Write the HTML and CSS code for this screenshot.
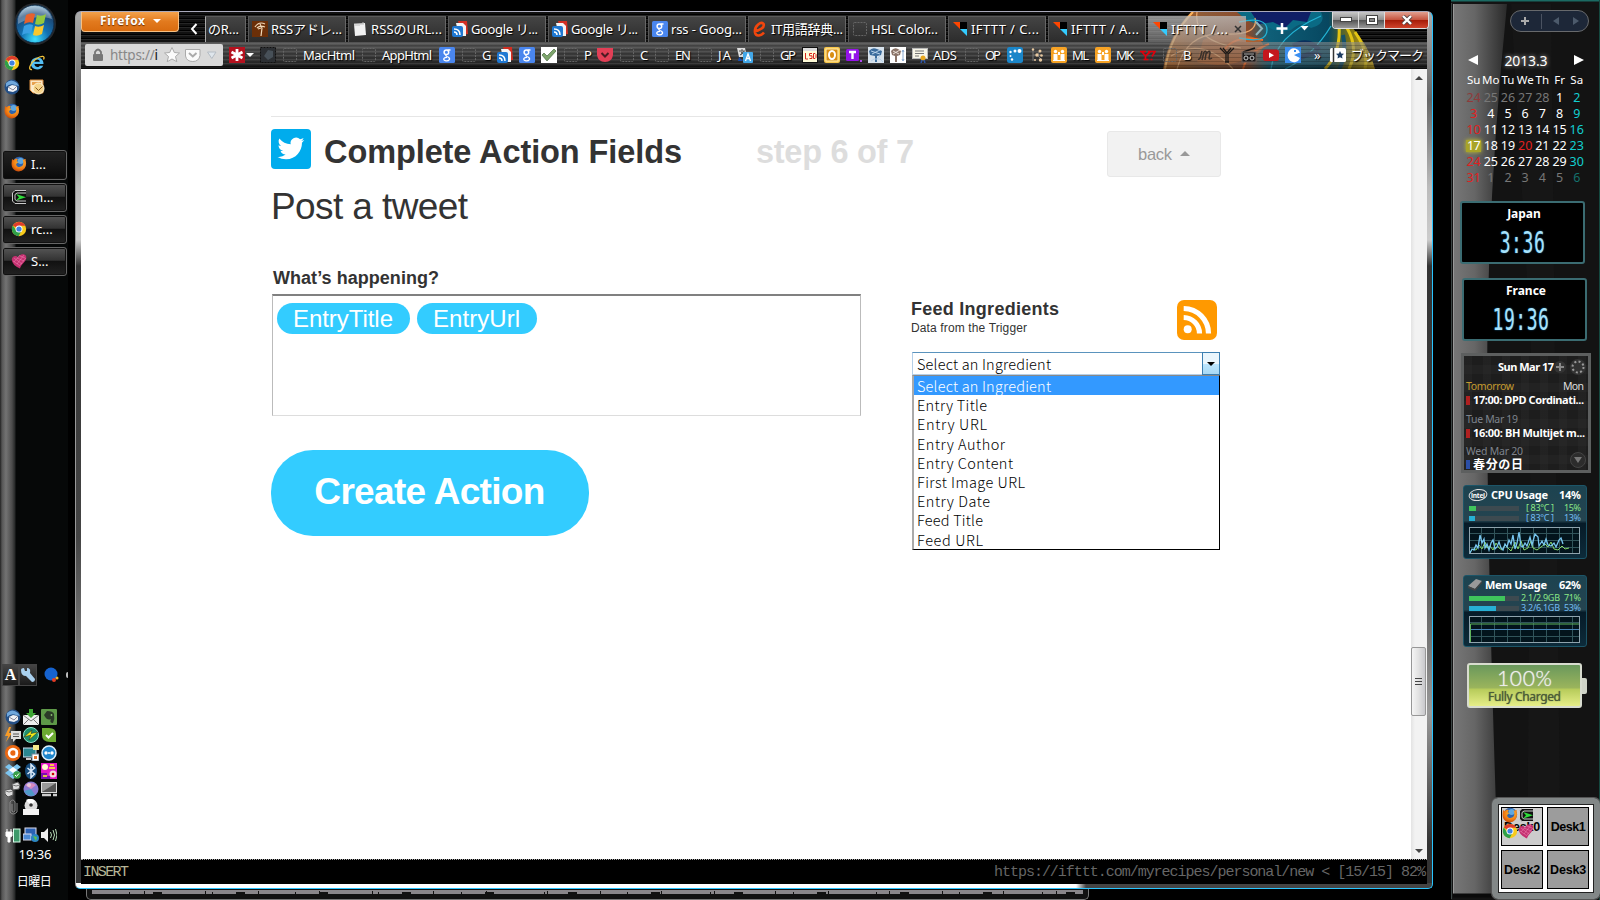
FILE: index.html
```html
<!DOCTYPE html>
<html lang="ja">
<head>
<meta charset="utf-8">
<title>IFTTT / Create</title>
<link rel="stylesheet" href="styles.css">
</head>
<body>
<svg class="defs" width="0" height="0">
  <defs>
    <linearGradient id="gSide" x1="0" x2="1" y1="0" y2="0"><stop offset="0" stop-color="#777"/><stop offset=".4" stop-color="#666"/><stop offset="1" stop-color="#2a2a2a"/></linearGradient>
    <radialGradient id="gOrb" cx=".5" cy=".9" r=".9"><stop offset="0" stop-color="#3fe0ff"/><stop offset=".4" stop-color="#1272b4"/><stop offset=".75" stop-color="#1c4a78"/><stop offset="1" stop-color="#9cc4dc"/></radialGradient>
    <radialGradient id="gFox" cx=".6" cy=".3" r=".8"><stop offset="0" stop-color="#ffc53a"/><stop offset=".6" stop-color="#f07a12"/><stop offset="1" stop-color="#b83a08"/></radialGradient>
    <pattern id="grid" width="13" height="7" patternUnits="userSpaceOnUse"><path d="M0 6.5H13M12.5 0V7" stroke="#31545a" fill="none"/></pattern>
  </defs>
  <symbol id="chrome" viewBox="0 0 16 16"><circle cx="8" cy="8" r="7.2" fill="#f7ca1c"/><path d="M8 8 1.8 4.4A7.2 7.2 0 0 1 14.4 4.8H8z" fill="#df3c2c"/><path d="M1.8 4.4A7.2 7.2 0 0 0 7.6 15.2L10.6 9.6 8 8 5 9z" fill="#2fa04a"/><circle cx="8" cy="8" r="3.5" fill="#fff"/><circle cx="8" cy="8" r="2.6" fill="#3f82e0"/></symbol>
  <symbol id="firefox" viewBox="0 0 16 16"><circle cx="8.3" cy="7.6" r="6.8" fill="#2d63ad"/><circle cx="9.6" cy="5" r="3" fill="#5fa8e0"/><path d="M1 3 2.8 4.2C4 2.6 5.6 2.6 6.8 3.2L5.6 5.2 7.4 6 5.2 8C5 10.6 8 11.8 10 10.6c3-1.4 2.6-5 1.6-7C14 4 15 1.6 14.6 4.6c1.8 6-2 10.6-6.6 10.8C3 15.6 .2 11.6 .6 7z" fill="url(#gFox)"/></symbol>
  <symbol id="ie" viewBox="0 0 16 16"><path d="M14.5 9H5.400c.2 3.400 4.400 3.800 5.400 1.800h3.400C12.300 16.300 1.800 15.800 1.800 8.600 1.800.6 14.800-.1 14.500 9zM5.400 6.800h5.400C10.500 3.800 5.800 3.800 5.400 6.800z" fill="#53bdf2"/><path d="M3 14.500C-1.500 15.500 1 8 7 4s9.500-3 7.500.5" stroke="#f3c43a" stroke-width="1.300" fill="none"/></symbol>
  <symbol id="bird" viewBox="0 0 16 16"><circle cx="8" cy="8" r="7.500" fill="#244f85"/><path d="M2 4Q7-1 13 4l2 3-4-1Q6 4 2 8z" fill="#6fa7dc"/><path d="M4 8l4-2 5 1v4l-4 2-5-1z" fill="#eef0f4"/><path d="M4 8l5 3 4-4" stroke="#889" fill="none"/></symbol>
  <symbol id="outlook" viewBox="0 0 16 16"><path d="M1 1h13v13H4l-3-3z" fill="#fbe8c8" stroke="#d98a3a"/><path d="M3 3h9v3H3z" fill="#e8a250"/><circle cx="9.500" cy="9.500" r="5.500" fill="#f5d48c" stroke="#fff5da"/><path d="m6.500 8.500 3 3 4-4" stroke="#8a5a20" fill="none"/></symbol>
  <symbol id="putty" viewBox="0 0 16 16"><path d="M15 1.500H4L1.500 4v8L4 14.500h11M15 4H6L4 5.500v5L6 12h9" stroke="#ccc" stroke-width="1" fill="#111"/><path d="M5 5l10 3.300L5 11.500l3-3.200z" fill="#2fdc3a"/></symbol>
  <symbol id="heart" viewBox="0 0 16 16"><path d="M9 15.500Q1 12 .8 6.500C1 3 5 2 7 4.500 8.500.5 15 0 15.300 4 15.500 9 10 11 9 15.500z" fill="#c43070"/><path d="M3 5l8 6M2 8l6 4M6 5l7 3M9 3l5 2M13 2 6 11M9 2 3 9M15 5l-7 8" stroke="#f08ab6" stroke-width=".5"/></symbol>
  <symbol id="ifttt" viewBox="0 0 16 16"><path d="M1 1h7v7z" fill="#ff4500"/><path d="M8 1h7v7H8z" fill="#000"/><path d="M8 8h7v7z" fill="#3cf"/></symbol>
  <symbol id="reader" viewBox="0 0 16 16"><path d="M6 0h9l1 13-6 1z" fill="#d32f22"/><path d="M4 2h7l3 3v10H7z" fill="#f4f4f4"/><rect x="0" y="5" width="11" height="11" rx="2" fill="#1f78d2"/><path d="M2 8q6 0 6 6M2 11q3 0 3 3" stroke="#fff" stroke-width="1.500" fill="none"/></symbol>
  <symbol id="gg" viewBox="0 0 16 16"><rect width="16" height="16" rx="1.500" fill="#4a86ee"/><circle cx="7.400" cy="5.200" r="2.300" fill="none" stroke="#fff" stroke-width="1.500"/><path d="M8.500 3h3M8 7.500q-2.500 1 0 2 3 1 2.500 2.800Q9.500 14 7 13.800 4 13.200 5 11.300q.8-1 3-1" fill="none" stroke="#fff" stroke-width="1.300"/></symbol>
  <symbol id="tree" viewBox="0 0 16 16"><rect width="16" height="16" fill="#6b2f08"/><path d="M3 6Q7 0 13 3M5 7q3-3 8-1M8 3l2 4-1 8M9 7 6 8" stroke="#f1d9b8" stroke-width="1.200" fill="none"/></symbol>
  <symbol id="note" viewBox="0 0 16 16"><path d="M2 3l11-1 1 12-11 1z" fill="#f1f1f1"/><path d="M3 2v3m2-3v3m2-3v3m2-3v2m2-3v3" stroke="#bbb"/></symbol>
  <symbol id="ee" viewBox="0 0 16 16"><path d="M2.500 10C8 10 13 6 11.500 2.800 9 0 2 5 3 11.500 4 16.500 9.500 14.500 12 11.500" stroke="#f2460d" stroke-width="2.600" fill="none"/></symbol>
  <symbol id="blank" viewBox="0 0 16 16"><rect x="1.500" y="1.500" width="13" height="13" rx="1" fill="none" stroke="#666" stroke-dasharray="2 1"/></symbol>
  <symbol id="star" viewBox="0 0 16 16"><rect width="16" height="16" fill="#b5121f"/><path d="M8 2v12M2.500 5l11 6M13.500 5l-11 6" stroke="#fff" stroke-width="2.800"/></symbol>
  <symbol id="dark" viewBox="0 0 16 16"><rect x=".5" y=".5" width="15" height="15" fill="#2c2f33" stroke="#111" stroke-dasharray="2 1"/><path d="M4 9l4-6 5 1v6l-5 3z" fill="#475058"/></symbol>
  <symbol id="check" viewBox="0 0 16 16"><rect width="16" height="16" fill="#fff"/><path d="m1 8 2-2 3 3 7-7 2 2-9 10z" fill="#7da56b" stroke="#4a6a42" stroke-width=".7"/></symbol>
  <symbol id="pocket" viewBox="0 0 16 16"><path d="M0 1h16v7q-1 7-8 7T0 8z" fill="#e23f56"/><path d="m4.500 6 3.500 3.500L11.500 6" stroke="#4b1a22" stroke-width="2" fill="none"/></symbol>
  <symbol id="trans" viewBox="0 0 16 16"><path d="M0 1h8l2 9H2z" fill="#ddd"/><path d="M2 4h6M5 2v2m2 0Q6 7 3 8m1-3 4 3" stroke="#555"/><path d="M2 10l4 4H1z" fill="#1a4fb0"/><rect x="6" y="5" width="10" height="11" rx="1" fill="#42a7e8"/><path d="m8.500 14 2.500-7 2.500 7m-4-2.500h3" stroke="#fff" stroke-width="1.300" fill="none"/></symbol>
  <symbol id="lsd" viewBox="0 0 16 16"><rect x=".5" y=".5" width="15" height="15" fill="#fffbd8" stroke="#111"/><path d="M1 2.500h14" stroke="#ddd" stroke-width="3"/><path d="M3.500 6v6H6M10 6.500H7.500v2.300H10v2.700H7.500M11.500 6.500h1.500l1 1v3l-1 1h-1.500z" stroke="#d9261c" fill="none"/></symbol>
  <symbol id="oo" viewBox="0 0 16 16"><rect width="16" height="16" rx="2" fill="#f8c64a"/><rect x="2" y="2" width="12" height="12" fill="#d98d12" stroke="#fff0b8"/><ellipse cx="8" cy="8" rx="3" ry="4" fill="none" stroke="#fff" stroke-width="2"/></symbol>
  <symbol id="tt" viewBox="0 0 16 16"><rect y="2" width="13" height="12" rx="1.500" fill="#9413e8"/><path d="M3 5h7M6.500 5v7" stroke="#fff" stroke-width="2.400"/><path d="M14 14h2" stroke="#b04af0" stroke-width="2"/></symbol>
  <symbol id="cloud" viewBox="0 0 16 16"><rect width="16" height="16" fill="#d7e2ec"/><path d="M1 4Q4 0 9 2l5 2-1 4-4 1v6H7V9L2 8z" fill="#3c6c9c"/><path d="m3 4 9 3M4 7l8-4M9 12l4-4M3 14l3-2h6l3 3" stroke="#b6d0e8" fill="none"/></symbol>
  <symbol id="cloud2" viewBox="0 0 16 16"><rect width="16" height="16" fill="#fff"/><path d="M1 4Q4 0 8 2l3 2-1 4-3 1v6H5V9L2 8z" fill="#8b7468"/><path d="m3 4 6 3M3 7l7-4" stroke="#eadfd6"/><path d="M13 3v11m-1-9 1-2 1 2m-2 7 1 2 1-2" stroke="#89a9d0" fill="none"/></symbol>
  <symbol id="cert" viewBox="0 0 16 16"><rect x=".5" y="1.500" width="15" height="10" fill="#f8f6e8" stroke="#bbb"/><path d="M3 4h9M3 6.500h9M3 9h4" stroke="#777"/><circle cx="11" cy="11" r="2.500" fill="#e9a81e"/><path d="m10 13-1 3m3-3 1 3" stroke="#2e56a8" stroke-width="1.500"/></symbol>
  <symbol id="dots" viewBox="0 0 16 16"><rect width="16" height="16" rx="2.500" fill="#1b86c9"/><g fill="#fff"><circle cx="3.500" cy="5" r="1.200"/><circle cx="8" cy="4" r="1.500"/><circle cx="12.500" cy="4" r="2"/><circle cx="3.500" cy="9" r="1"/><circle cx="5" cy="12.500" r="1.200"/></g></symbol>
  <symbol id="net" viewBox="0 0 16 16"><path d="M4 2v12M4 8h4m0 0 3-4m-3 4 4 4M8 8h4" stroke="#777" fill="none"/><g fill="#e8c9a0"><circle cx="4" cy="2.500" r="1.200"/><circle cx="11" cy="4" r="1.500"/><circle cx="8" cy="8" r="1.700"/><circle cx="12.500" cy="8.500" r="1.300"/><circle cx="11.500" cy="13" r="1.700"/><circle cx="6" cy="13" r="1"/></g></symbol>
  <symbol id="orange" viewBox="0 0 16 16"><rect width="16" height="16" rx="2" fill="#f7a325"/><g fill="#fff"><circle cx="4.500" cy="4.500" r="1.700"/><circle cx="11.500" cy="4.500" r="1.700"/><path d="M2.500 7h4v6h-4zM9.500 7h4v6h-4zM7 5h2v3H7zM2 13h12v1H2z"/></g></symbol>
  <symbol id="yh" viewBox="0 0 16 16"><path d="M0 4.500h6M2 5l3.500 4v3.500M10 5 5.500 9M8 4.500h4M3.500 12.500h5M11.500 4.500H15L12 9.500M10.500 12.500h2" stroke="#e0000c" stroke-width="1.700" fill="none"/></symbol>
  <symbol id="mm" viewBox="0 0 16 16"><path d="M1 12q2 1 3-4l1-4M5 13l2-8m0 0q3-2 2 2l-1 6m1-6q4-5 4-1l-1 5q0 2 3 0" stroke="#3a302a" stroke-width="1.500" fill="none"/></symbol>
  <symbol id="yy" viewBox="0 0 16 16"><path d="M1 1l6 6v8m2 0V7l6-6M4 1l4 5 4-5M6 15h4" stroke="#1d1a18" stroke-width="1.300" fill="none"/></symbol>
  <symbol id="radio" viewBox="0 0 16 16"><path d="M2 5 14 1" stroke="#111" stroke-width="1.500"/><rect x="1" y="5" width="14" height="10" fill="#1d1a1a" stroke="#6a5f5a"/><circle cx="5" cy="11" r="2" fill="none" stroke="#ccc"/><circle cx="11" cy="11" r="2" fill="none" stroke="#ccc"/><path d="M3 7h10" stroke="#aaa"/></symbol>
  <symbol id="yt" viewBox="0 0 16 16"><rect y="2.500" width="16" height="11.500" rx="2.500" fill="#c4171d"/><path d="m6 5.500 5 2.700-5 2.800z" fill="#fff"/></symbol>
  <symbol id="pac" viewBox="0 0 16 16"><rect width="16" height="16" fill="#3c8ff0"/><path d="M9 8 15 5.500A6.500 7 0 1 0 15 11z" fill="#fff"/><rect x="9" y="3" width="2" height="2" fill="#3c8ff0"/></symbol>
  <symbol id="bm" viewBox="0 0 16 16"><rect x="0" y="1" width="16" height="14" rx="1.500" fill="#fff"/><path d="M3.500 1v14" stroke="#333" stroke-width="1.500"/><path d="m10 4 1.200 2.500 2.800.3-2 2 .5 2.700-2.500-1.300-2.500 1.300.5-2.700-2-2 2.800-.3z" fill="#1d3d63"/></symbol>
  <!-- notification area -->
  <symbol id="mail" viewBox="0 0 16 16"><path d="M0 6h16v10H0z" fill="#eee"/><path d="m0 6 8 6 8-6M0 16l6-6m10 6-6-6" stroke="#777" fill="none"/><path d="M6 0h4v4h3L8 9 3 4h3z" fill="#3fa535"/></symbol>
  <symbol id="ever" viewBox="0 0 16 16"><rect width="16" height="16" rx="1" fill="#5e9948"/><path d="M3 6 6 2q6 0 7 3 1 5-1 9-4 0-2-4-4 2-7-4z" fill="#2b3a28"/><circle cx="10.500" cy="6" r=".9" fill="#8bc070"/></symbol>
  <symbol id="bolt" viewBox="0 0 16 16"><path d="M4 0 0 9h3l-2 6 6-9H4l2-6z" fill="#f79b27"/><path d="M6 4h10v8h-5l-3 3v-3H6z" fill="#ddd"/><path d="M8 7h6M8 9.500h6" stroke="#555"/></symbol>
  <symbol id="flash" viewBox="0 0 16 16"><circle cx="8" cy="8" r="7.500" fill="#1f8f6d" stroke="#8fe3cd"/><path d="M1 10 9 3l-1 3.500 7-1.500-9 8 2-5z" fill="#f4ee1a" stroke="#222" stroke-width=".5"/></symbol>
  <symbol id="skype" viewBox="0 0 16 16"><path d="M1 1h7q7 0 7 6v8H9Q1 15 1 8z" fill="#6cab32"/><path d="m5 8 2.500 2.500L12 6" stroke="#fff" stroke-width="2" fill="none"/></symbol>
  <symbol id="avast" viewBox="0 0 16 16"><circle cx="8" cy="8" r="8" fill="#ea6712"/><circle cx="8" cy="8" r="4" fill="none" stroke="#fff" stroke-width="2.500"/><path d="M11.500 5v7" stroke="#fff" stroke-width="2"/></symbol>
  <symbol id="pc" viewBox="0 0 16 16"><rect y="3" width="13" height="9" fill="#2a8790" stroke="#cde"/><rect x="10" y="0" width="6" height="5" fill="#f4ea8a"/><rect x="9" y="9" width="7" height="7" fill="#fff" stroke="#789"/><path d="M3 14h5" stroke="#ccc" stroke-width="2"/><rect x="11" y="11" width="3" height="3" fill="#e3762c"/></symbol>
  <symbol id="team" viewBox="0 0 16 16"><circle cx="8" cy="8" r="7" fill="#2087cc" stroke="#dff0fb" stroke-width="1.500"/><circle cx="5" cy="8" r="1.700" fill="#fff"/><circle cx="11" cy="8" r="1.700" fill="#fff"/><circle cx="8" cy="8" r="1" fill="#fff"/></symbol>
  <symbol id="drop" viewBox="0 0 16 16"><path d="m4 1 4 3 4-3 4 3-4 3 4 3-4 3-4-2-4 2-4-3 4-3-4-3zM4 13l4-1.500 4 1.500-4 3z" fill="#7cc4ef"/><path d="m4 7 4-3 4 3-4 3z" fill="#fff"/><circle cx="12" cy="12" r="3.800" fill="#39a048"/><path d="m10 12 1.500 1.500L14 10.500" stroke="#fff" fill="none"/></symbol>
  <symbol id="bt" viewBox="0 0 16 16"><ellipse cx="8" cy="8" rx="6" ry="8" fill="#174c7c"/><path d="m4.500 5 7 6-3.500 3.500v-13l3.500 3.500-7 6" stroke="#dcebfa" stroke-width="1.500" fill="none"/></symbol>
  <symbol id="game" viewBox="0 0 16 16"><rect width="16" height="16" fill="#e018c6"/><circle cx="4" cy="4" r="3" fill="#fffbd0"/><circle cx="12" cy="11" r="3.500" fill="#f4dada"/><path d="M0 10h6v3h3v3H0z" fill="#7a0fb0"/><path d="M8 5h6M2 13h4M9 2h4" stroke="#ff2" stroke-width="1.500"/><circle cx="12" cy="11" r="1.300" fill="#c00"/></symbol>
  <symbol id="dice" viewBox="0 0 16 16"><path d="m7 3 6-2 2 3-1 4-6 1zM0 9l6-1 2 2v4l-5 2-3-3z" fill="#ddd" stroke="#555"/><path d="m8 4 3 1 4-1M1 10l3 1 4-1" stroke="#777" fill="none"/></symbol>
  <symbol id="sphere" viewBox="0 0 16 16"><circle cx="8" cy="8" r="7.500" fill="#8a7bd2"/><path d="M2 4Q8 0 13 4L8 8z" fill="#d88ac0"/><path d="M1 10l7-2 4 6q-7 3-11-4z" fill="#4f9bc8"/><circle cx="6" cy="4" r="2" fill="#eee" opacity=".6"/></symbol>
  <symbol id="screen" viewBox="0 0 16 16"><rect x=".5" y="1.500" width="15" height="10" fill="#999" stroke="#ddd"/><path d="M1 11 15 2v9z" fill="#555"/><path d="M1 14h9m2 0h4" stroke="#ccc" stroke-width="2.500"/></symbol>
  <symbol id="clip" viewBox="0 0 16 16"><path d="M7 5v7q1.500 2 3 0V3Q8-1 5 3v10q3 4 7 0V4" stroke="#888" fill="none"/></symbol>
  <symbol id="disc" viewBox="0 0 16 16"><circle cx="8" cy="6.500" r="6.500" fill="#ddd"/><path d="M8 6.500 3 1q5-3 9 1z" fill="#fff"/><circle cx="8" cy="6" r="1.800" fill="#333"/><path d="M0 10h16v6H0z" fill="#f4f4f4"/></symbol>
  <symbol id="power" viewBox="0 0 16 16"><rect x="8.500" y="2" width="6.500" height="13" fill="#3c9a6a" stroke="#dfe"/><path d="M1 5h6v4l-2 1v5H3v-5L1 9zM2 2v3m4-3v3" fill="#fff" stroke="#fff"/></symbol>
  <symbol id="lan" viewBox="0 0 16 16"><rect x="2" y="1" width="11" height="8" fill="#2b62b5" stroke="#dde"/><rect x="0" y="7" width="8" height="6" fill="#4c8ad4" stroke="#dde"/><circle cx="12" cy="11" r="4" fill="#2a84c6"/><path d="M10 9l4 1-1 4z" fill="#5ac04f"/></symbol>
  <symbol id="vol" viewBox="0 0 16 16"><path d="M0 5h3l4-4v14l-4-4H0z" fill="#eee"/><path d="M9.500 5q2 3 0 6M12 3q3 5 0 10M14.500 2q3 6 0 12" stroke="#b7dcb7" fill="none"/></symbol>
  <symbol id="wrench" viewBox="0 0 16 16"><path d="M1 3q0-2 3-2l1 3h2V1q4 0 3 5l5 6q0 3-3 3L6 9Q1 9 1 3" fill="#a9d0ee"/></symbol>
  <symbol id="ball" viewBox="0 0 16 16"><circle cx="8" cy="7" r="6.500" fill="#1663cf"/><circle cx="11" cy="13" r="2" fill="#e33b24"/><circle cx="14" cy="11" r="1.500" fill="#f4b72a"/></symbol>
</svg>

<!-- taskbar -->
<aside class="taskbar">
  <svg class="orb" width="42" height="44" viewBox="0 0 42 44"><circle cx="21" cy="22" r="21" fill="#25282c"/><circle cx="21" cy="22" r="19" fill="url(#gOrb)" stroke="#0c2b48"/><path d="M4 17Q8 3 21 4T38 17Q22 11 4 22z" fill="#fff" opacity=".3"/><path d="M12 13q5-3 9-1l-2 9q-4-2-9 1z" fill="#e8612c"/><path d="M23 13q5 2 9-1l-2 9q-5 3-9 1z" fill="#93c83e"/><path d="M10 24q5-3 9-1l-2 9q-4-2-9 1z" fill="#3aa0e4"/><path d="M21 24q4 2 9-1l-2 9q-5 3-9 1z" fill="#fbc82e"/></svg>
  <div class="quick">
    <svg><use href="#chrome"/></svg><svg><use href="#ie"/></svg>
    <svg><use href="#bird"/></svg><svg><use href="#outlook"/></svg>
    <svg><use href="#firefox"/></svg>
  </div>
  <div class="tasks">
    <div class="task task-on"><svg><use href="#firefox"/></svg><span>I...</span></div>
    <div class="task"><svg><use href="#putty"/></svg><span>m...</span></div>
    <div class="task"><svg><use href="#chrome"/></svg><span>rc...</span></div>
    <div class="task"><svg><use href="#heart"/></svg><span>S...</span></div>
  </div>
  <div class="ime"><span class="ime-a">A</span><span class="ime-b"><svg><use href="#wrench"/></svg></span><svg><use href="#ball"/></svg><i class="ime-p"></i></div>
  <div class="tray">
    <svg><use href="#bird"/></svg><svg><use href="#mail"/></svg><svg><use href="#ever"/></svg>
    <svg><use href="#bolt"/></svg><svg><use href="#flash"/></svg><svg><use href="#skype"/></svg>
    <svg><use href="#avast"/></svg><svg><use href="#pc"/></svg><svg><use href="#team"/></svg>
    <svg><use href="#drop"/></svg><svg><use href="#bt"/></svg><svg><use href="#game"/></svg>
    <svg><use href="#dice"/></svg><svg><use href="#sphere"/></svg><svg><use href="#screen"/></svg>
    <svg><use href="#clip"/></svg><svg><use href="#disc"/></svg>
  </div>
  <div class="tray tray-sys"><svg><use href="#power"/></svg><svg><use href="#lan"/></svg><svg><use href="#vol"/></svg></div>
  <div class="time"><span data-w="33">19:36</span></div>
  <div class="day"><span data-w="35">日曜日</span></div>
</aside>

<div class="behind"><div class="behind-strip"></div></div>

<!-- browser window -->
<section class="window">
  <div class="chrome-area">
    <svg class="art" width="222" height="57" viewBox="0 0 222 57">
      <defs>
        <linearGradient id="planet" gradientUnits="userSpaceOnUse" x1="0" y1="0" x2="212" y2="0"><stop offset="0" stop-color="#b8621c"/><stop offset=".2" stop-color="#8d5a38"/><stop offset=".4" stop-color="#8a4a2c"/><stop offset=".5" stop-color="#0f5f78"/><stop offset=".78" stop-color="#074760"/><stop offset=".88" stop-color="#7a7216"/><stop offset="1" stop-color="#d6ac12"/></linearGradient>
      </defs>
      <path d="M0 57Q6 22 28 0H170Q202 20 212 57z" fill="url(#planet)"/>
      <path d="M74 0h84q6 12-10 16-10-8-20 2-18 4-26-6-14 2-28-12z" fill="#0a6a84"/>
      <path d="M88 0h60l-4 10-14-2-8 8-12-6-14 2z" fill="#101f66"/>
      <path d="M40 28q30-14 56 0 10 6-4 16-30 14-58 6z" fill="#c8662a" opacity=".7"/>
      <g fill="none">
        <path d="M2 57Q8 22 30 0" stroke="#ffb35a" stroke-width="2"/>
        <path d="M14 57Q24 20 60 22T92 6M8 44Q40 24 70 57M34 0Q30 30 78 36" stroke="#f0a868" stroke-width="1.200"/>
        <path d="M60 40Q70 22 100 28M80 57Q84 40 106 32" stroke="#ff6a20" stroke-width="2"/>
        <path d="M76 10Q104 4 104 18T76 26M108 57Q112 24 158 4M122 57Q150 44 168 14" stroke="#23b3d4" stroke-width="1.300"/>
        <path d="M130 34q16-8 26 4M134 48q14-10 24-4" stroke="#0b2f5c" stroke-width="5"/>
        <path d="M162 57Q178 40 176 14M186 57Q196 36 184 16M202 57Q206 40 192 20" stroke="#e3c413" stroke-width="3"/>
        <path d="M176 57q8-14 4-34" stroke="#14506a" stroke-width="4"/>
      </g>
    </svg>
    <div class="titlebar">
      <div class="fx"><span data-w="45">Firefox</span><i class="tri"></i></div>
      <svg class="prev" width="10" height="14" viewBox="0 0 10 14"><path d="M7.500 2 3 7l4.500 5" stroke="#fff" stroke-width="2" fill="none"/></svg>
      <div class="tabs">
        <div class="tab tab-cut"><span data-w="31">のR...</span></div>
        <div class="tab"><svg><use href="#tree"/></svg><span data-w="71">RSSアドレ...</span></div>
        <div class="tab"><svg><use href="#note"/></svg><span data-w="71">RSSのURL...</span></div>
        <div class="tab"><svg><use href="#reader"/></svg><span data-w="67">Google リ...</span></div>
        <div class="tab"><svg><use href="#reader"/></svg><span data-w="67">Google リ...</span></div>
        <div class="tab"><svg><use href="#gg"/></svg><span data-w="71">rss - Goog...</span></div>
        <div class="tab"><svg><use href="#ee"/></svg><span data-w="72">IT用語辞典...</span></div>
        <div class="tab"><svg><use href="#blank"/></svg><span data-w="67">HSL Color...</span></div>
        <div class="tab"><svg><use href="#ifttt"/></svg><span data-w="68">IFTTT / C...</span></div>
        <div class="tab"><svg><use href="#ifttt"/></svg><span data-w="68">IFTTT / A...</span></div>
        <div class="tab tab-on"><svg><use href="#ifttt"/></svg><span data-w="57">IFTTT /...</span><svg class="x" viewBox="0 0 8 8"><path d="m1 1 6 6m0-6L1 7" stroke="#333" stroke-width="1.500"/></svg></div>
      </div>
      <svg class="tabctl" width="66" height="26" viewBox="0 0 66 26"><path d="m10 6 6 6.500-6 6.500" stroke="#8fb4bc" stroke-width="2" fill="none"/><path d="M36 7v11M30.500 12.500h11" stroke="#fff" stroke-width="2.500"/><path d="M54.500 10h8l-4 4.500z" fill="#fff"/></svg>
      <div class="winbtns">
        <span><svg width="12" height="6" viewBox="0 0 12 6"><rect x=".5" y=".5" width="11" height="4" fill="#fff" stroke="#444"/></svg></span>
        <span><svg width="12" height="10" viewBox="0 0 12 10"><rect x=".5" y=".5" width="11" height="9" fill="#fff" stroke="#444"/><rect x="3.500" y="3.500" width="5" height="3" fill="#888" stroke="#444"/></svg></span>
        <span class="close"><svg width="12" height="10" viewBox="0 0 12 10"><path d="m2 1 8 8m0-8L2 9" stroke="#544" stroke-width="4"/><path d="m2 1 8 8m0-8L2 9" stroke="#fff" stroke-width="2.400"/></svg></span>
      </div>
    </div>
    <div class="bookbar">
      <div class="url">
        <svg width="12" height="14" viewBox="0 0 12 14"><path d="M3 7V4q3-5 6 0v3" stroke="#777" stroke-width="1.800" fill="none"/><rect x="1" y="6" width="10" height="7" rx="1" fill="#777"/></svg>
        <span data-w="48">https://<b>i</b></span>
        <svg width="58" height="18" viewBox="0 0 58 18"><path d="m8 1.500 2.300 5 5.200.5-4 3.500 1.300 5.200L8 13l-4.800 2.700L4.500 10.500.5 7l5.200-.5z" fill="#fafafa" stroke="#aaa"/><path d="M21.500 3.500h14.500v6q-1 6-7.200 6T21.500 10z" fill="#fafafa" stroke="#aaa"/><path d="m25 7 3.800 3.500L32.500 7" stroke="#aaa" stroke-width="2" fill="none"/><path d="M43.500 6h8.500l-4.200 6.500z" fill="#dfe6ec" stroke="#b5bcc4"/></svg>
      </div>
      <div class="marks" id="marks"></div>
    </div>
  </div>

  <div class="view">
    <main class="page">
      <div class="wrap">
        <header class="head">
          <svg class="tw" width="40" height="40" viewBox="0 0 40 40"><rect width="40" height="40" rx="4" fill="#00aced"/><path transform="translate(6.500 6) scale(1.120)" d="M23.950 4.570a10 10 0 0 1-2.820.77 4.960 4.960 0 0 0 2.160-2.720 9.900 9.900 0 0 1-3.120 1.190 4.920 4.920 0 0 0-8.380 4.480A13.930 13.930 0 0 1 1.640 3.160a4.920 4.920 0 0 0 1.520 6.570 4.900 4.900 0 0 1-2.230-.61v.06a4.920 4.920 0 0 0 3.950 4.830 5 5 0 0 1-2.210.08 4.940 4.940 0 0 0 4.600 3.420A9.870 9.870 0 0 1 0 19.540a14 14 0 0 0 7.550 2.210c9.140 0 14.300-7.720 14.300-14.300 0-.21-.01-.42-.02-.63a9.940 9.940 0 0 0 2.120-2.250z" fill="#fff"/></svg>
          <h1><span data-w="358">Complete Action Fields</span></h1>
          <span class="step"><span data-w="158">step 6 of 7</span></span>
          <a class="back"><span data-w="34">back</span><i></i></a>
        </header>
        <h2><span data-w="197">Post a tweet</span></h2>
        <div class="cols">
          <div class="left">
            <label><span data-w="166">What’s happening?</span></label>
            <div class="area"><span class="pill"><span data-w="100">EntryTitle</span></span><span class="pill"><span data-w="87">EntryUrl</span></span></div>
            <button class="create"><span data-w="231">Create Action</span></button>
          </div>
          <div class="right">
            <div class="feed">
              <div><h3><span data-w="148">Feed Ingredients</span></h3><p><span data-w="116">Data from the Trigger</span></p></div>
              <svg width="40" height="40" viewBox="0 0 40 40"><rect width="40" height="40" rx="7" fill="#ff9900"/><circle cx="10.700" cy="29.300" r="4" fill="#fff"/><path d="M6.700 17.500A16 16 0 0 1 22.500 33.500M6.700 8.500A25 25 0 0 1 31.500 33.500" stroke="#fff" stroke-width="5.200" fill="none"/></svg>
            </div>
            <div class="select"><span data-w="134">Select an Ingredient</span><i class="drop"><b></b></i></div>
            <ul class="list">
              <li class="on"><span data-w="134">Select an Ingredient</span></li>
              <li><span data-w="70">Entry Title</span></li>
              <li><span data-w="70">Entry URL</span></li>
              <li><span data-w="88">Entry Author</span></li>
              <li><span data-w="96">Entry Content</span></li>
              <li><span data-w="108">First Image URL</span></li>
              <li><span data-w="73">Entry Date</span></li>
              <li><span data-w="66">Feed Title</span></li>
              <li><span data-w="66">Feed URL</span></li>
            </ul>
          </div>
        </div>
      </div>
    </main>
    <div class="scroll"><i class="up"></i><div class="thumb"><i></i><i></i><i></i></div><i class="down"></i></div>
  </div>
  <footer class="status"><span class="ins" data-w="46">INSERT</span><span data-w="432">https://ifttt.com/myrecipes/personal/new &lt; [15/15] 82%</span></footer>
</section>

<!-- gadgets -->
<aside class="side">
  <svg class="side-bg" width="149" height="900" viewBox="0 0 149 900"><rect width="149" height="900" fill="#131313"/><path d="M60 4 80 350 76 895H110L100 4z" fill="#161616"/><path d="M2 4H56Q36 200 36 380T48 895H2z" fill="url(#gSide)"/><path d="M0 .5H149" stroke="#1b6a63" stroke-width="2"/><path d="M.5 3V899" stroke="#3c4544"/><path d="M2.500 4V895" stroke="#999"/><path d="M148.500 0V900" stroke="#14483f"/><path d="M2 895.500H149" stroke="#0a0a0a" stroke-width="4"/></svg>
  <div class="nav"><svg width="79" height="22" viewBox="0 0 79 22"><rect x=".5" y=".5" width="78" height="21" rx="10.500" fill="#1d2738" stroke="#67696c"/><path d="M15 7v8M11 11h8" stroke="#aaa" stroke-width="2"/><path d="M31.500 4v15" stroke="#4a5261"/><path d="m49 7-6 4 6 4zM63 7l6 4-6 4z" fill="#4c5a6b"/></svg></div>
  <div class="cal-title"><i class="l"></i><span data-w="43">2013.3</span><i class="r"></i></div>
  <div class="cal" id="cal"></div>
  <div class="clock"><b>Japan</b><span class="led">3:36</span></div>
  <div class="clock clock2"><b>France</b><span class="led led2">19:36</span></div>
  <div class="agenda">
    <div class="ag-head"><b data-w="56">Sun Mar 17</b><svg width="32" height="18" viewBox="0 0 32 18"><circle cx="6" cy="9" r="6" fill="#333"/><path d="M6 5v8M2 9h8" stroke="#888" stroke-width="2"/><circle cx="24" cy="9" r="8" fill="#333"/><circle cx="24" cy="9" r="5.500" fill="none" stroke="#999" stroke-width="2" stroke-dasharray="2 2.300"/></svg></div>
    <div class="ag-day gold"><span data-w="48">Tomorrow</span><em data-w="21">Mon</em></div>
    <div class="ag-ev"><i></i><b data-w="111">17:00: DPD Cordinati...</b></div>
    <div class="ag-day"><span data-w="52">Tue Mar 19</span></div>
    <div class="ag-ev"><i></i><b data-w="112">16:00: BH Multijet m...</b></div>
    <div class="ag-day ag-last"><span data-w="57">Wed Mar 20</span></div>
    <div class="ag-ev jp"><i></i><b data-w="50">春分の日</b></div>
    <svg class="ag-more" width="16" height="16" viewBox="0 0 16 16"><circle cx="8" cy="8" r="7.500" fill="#2c2c2c" stroke="#444"/><path d="M4 5h8l-4 6z" fill="#777"/></svg>
  </div>
  <div class="meter cpu">
    <div class="m-head"><svg width="20" height="14" viewBox="0 0 20 14"><ellipse cx="10" cy="7" rx="9" ry="5.500" fill="#2a4450" stroke="#ddd" transform="rotate(-8 10 7)"/><text x="3" y="9.500" font-size="6.500" font-weight="bold" fill="#fff" font-family="Open Sans" textLength="14">intel</text></svg><b data-w="57">CPU Usage</b><b class="pc" data-w="22">14%</b></div>
    <div class="m-row g"><i><u style="width:14%"></u></i><span data-w="28">[ 83°C ]</span><span class="pc" data-w="17">15%</span></div>
    <div class="m-row b"><i><u style="width:12%"></u></i><span data-w="28">[ 83°C ]</span><span class="pc" data-w="17">13%</span></div>
    <svg class="graph" width="111" height="27" viewBox="0 0 111 27"><rect x=".5" y=".5" width="110" height="26" fill="#03141c"/><rect width="111" height="27" fill="url(#grid)"/><path d="M1 25l3-3 3 1 3-5 3 4 3-7 2 6 3-2 3 4 3-7 3 5 3 2 3-5 3 3 3 3 4-9 3 7 3-8 3 9 4-2 3-7 2 7 4 2 4-3 4-3 3 3 3-5 3 7 4 1 4-4 3 3 4-1" stroke="#86d868" fill="none"/><path d="M1 26l2-4 2 1 2-5 2 3 2-13 2 8 2-4 1 9 2-4 2 6 2-7 2-3 2 9 2-2 2-5 2 6 2 2 2-6 2 3 2-7 2 4 2-9 2 14 2-6 2-11 2 14 2 1 2-4 2 3 3-9 2 8 3-11 3 3 1 9 3-5 2 4 2-6 2 6 3 1 3-3 2 4 3-7 2-2 2 6" stroke="#78c6f0" stroke-width="1.300" fill="none"/><rect x=".5" y=".5" width="110" height="26" fill="none" stroke="#8fa3ad"/></svg>
  </div>
  <div class="meter mem">
    <div class="m-head"><svg width="14" height="13" viewBox="0 0 14 13"><path d="M0 8 8 1l6 2-7 8z" fill="#999"/><path d="M0 8l7 3v2l-7-3zM7 11l7-8v2l-7 8z" fill="#444"/></svg><b data-w="62">Mem Usage</b><b class="pc" data-w="22">62%</b></div>
    <div class="m-row g"><i><u style="width:71%"></u></i><span data-w="39">2.1/2.9GB</span><span class="pc" data-w="17">71%</span></div>
    <div class="m-row b"><i><u style="width:53%"></u></i><span data-w="39">3.2/6.1GB</span><span class="pc" data-w="17">53%</span></div>
    <svg class="graph" width="111" height="27" viewBox="0 0 111 27"><rect width="111" height="27" fill="#03141c"/><rect width="111" height="27" fill="url(#grid)"/><path d="M1.500 26V8H110" stroke="#5fb45a" fill="none"/><path d="M2 13.500H110" stroke="#4a86b8" fill="none"/><rect x=".5" y=".5" width="110" height="26" fill="none" stroke="#8fa3ad"/></svg>
  </div>
  <div class="battery"><div class="cell"><span class="full" data-w="55">100%</span><span class="chg" data-w="73">Fully Charged</span></div><i></i></div>
  <div class="pager"><div class="pager-in">
    <div class="desk desk-on"><span data-w="36">Desk0</span><div class="mini"><svg><use href="#firefox"/></svg><svg><use href="#putty"/></svg><svg><use href="#chrome"/></svg><svg><use href="#heart"/></svg></div></div>
    <div class="desk"><span data-w="35">Desk1</span></div><div class="desk"><span data-w="36">Desk2</span></div><div class="desk"><span data-w="36">Desk3</span></div>
  </div></div>
</aside>
<script src="app.js"></script>
</body>
</html>
```
FILE: styles.css
```css
* { box-sizing: border-box; }
body { margin: 0; width: 1600px; height: 900px; overflow: hidden; background: #000; position: relative; font-family: "Noto Sans", "Noto Sans CJK JP", sans-serif; }
.defs { position: absolute; }
svg { display: block; flex: none; }
svg:not([width]) { width: 16px; height: 16px; }
h1, h2, h3, p, ul { margin: 0; padding: 0; }
[data-w] { display: inline-block; white-space: nowrap; flex: none; }
i { display: block; }

/* taskbar */
.taskbar { position: absolute; left: 0; top: 0; width: 68px; height: 900px; background: linear-gradient(90deg, #222 0, #555 2px, #737373 6px, #4c4c4c 12px, #262828 15px, #060808 16px, #060808 100%); color: #fff; }
.orb { margin: 2px 0 0 14px; }
.quick { display: grid; grid-template-columns: 25px 16px; row-gap: 8px; margin: 9px 0 0 4px; }
.tasks { margin: 31px 0 0 2px; display: flex; flex-direction: column; gap: 3px; width: 65px; }
.task { height: 29px; border: 1px solid #666; border-radius: 3px; box-shadow: inset 0 0 0 1px #111; background: linear-gradient(#555, #333 45%, #111 50%, #222); display: flex; align-items: center; padding: 0 0 2px 8px; gap: 4px; font-size: 13px; }
.task-on { background: linear-gradient(#222, #0a0a0a); height: 30px; }
.ime { display: flex; align-items: center; margin: 387px 0 0 2px; height: 23px; }
.ime > span { height: 22px; width: 19px; border: 1px solid #444; background: linear-gradient(#444, #1a1a1a); display: flex; align-items: center; justify-content: center; font: bold 16px "Liberation Serif", serif; }
.ime > svg { margin-left: 6px; }
.ime > .ime-p { width: 2px; height: 6px; margin-left: 7px; border-radius: 2px 0 0 2px; background: #bbb; }
.tray { display: grid; grid-template-columns: repeat(3, 16px); gap: 2px; margin: 23px 0 0 5px; }
.tray-sys { margin-top: 12px; }
.time { text-align: center; font-size: 13px; line-height: 20px; margin: 1px 0 0 2px; }
.day { text-align: center; font-size: 12px; line-height: 20px; margin-top: 8px; }

.behind { position: absolute; left: 86px; top: 886px; width: 1003px; height: 14px; background: #111; border: 1px solid #777; border-top: 0; border-radius: 0 0 5px 5px; padding: 4px 5px; }
.behind-strip { height: 4px; background: repeating-linear-gradient(90deg, transparent 0 37px, #111 37px 38px, transparent 38px 61px, #111 61px 70px, transparent 70px 83px) 0 100% / 100% 2px no-repeat, repeating-linear-gradient(90deg, transparent 0 52px, #111 52px 53px, transparent 53px 113px, #111 113px 114px) 0 100% / 100% 3px no-repeat, #89868a; }

/* window */
.window { position: absolute; left: 75px; top: 11px; width: 1358px; height: 878px; border: 1px solid #29c5ff; border-top-color: #aab; border-left-color: #999; border-radius: 6px 6px 5px 5px; padding: 0 5px 4px; background: linear-gradient(90deg, #fff 0, #fff 1000px, #444 1010px, #444) 0 100% / 100% 5px no-repeat, linear-gradient(#aaa 0, #666 10%, #bbb 20%, #ccc 26%, #333 29%, #444 60%, #999 80%, #333 95%); }
.chrome-area { position: relative; height: 57px; background: repeating-linear-gradient(#111 0 2px, #000 2px 3px, #262626 3px 4px); }
.art { position: absolute; left: 1082px; top: 0; }
.titlebar { position: relative; height: 30px; display: flex; align-items: flex-start; }
.fx { width: 98px; height: 20px; background: linear-gradient(#f3a24c, #e27a1e 50%, #d96c10); border: 1px solid #f7c083; border-top: 0; border-radius: 0 0 4px 4px; color: #fff; font-weight: bold; font-size: 12px; line-height: 16px; display: flex; align-items: center; padding: 0 0 2px 18px; gap: 8px; text-shadow: 0 1px 1px #703000; }
.tri { border: 4px solid transparent; border-top-color: #fff; border-bottom: 0; }
.prev { margin: 10px 0 0 10px; }
.tabs { display: flex; margin: 4px 0 0 6px; gap: 2px; }
.tab { width: 98px; height: 26px; background: linear-gradient(#444, #2c2c2c); border: 1px solid #595959; border-bottom: 0; border-right-color: #666; display: flex; align-items: center; padding: 0 0 1px 3px; gap: 3px; color: #fff; font-size: 13px; overflow: hidden; text-shadow: 1px 1px 1px #000; line-height: 22px; }
.tab-cut { width: 41px; border-left-color: #aaa; padding-left: 2px; }
.tab-on { background: linear-gradient(rgba(190,190,190,.75), rgba(150,150,150,.6)); border: 0; padding-left: 4px; }
.tab .x { width: 8px; height: 8px; margin-left: 3px; }
.tabctl { margin-top: 4px; }
.winbtns { display: flex; position: absolute; right: -2px; top: 0; height: 17px; border: 1px solid #ddd; border-top: 0; border-radius: 0 0 4px 4px; overflow: hidden; }
.winbtns span { width: 26px; background: linear-gradient(#c8c8c8, #8c8c8c 50%, #555 52%, #999); border-right: 1px solid #ddd; display: flex; align-items: center; justify-content: center; }
.winbtns .close { width: 43px; border: 0; background: linear-gradient(#e2a090, #c4513c 50%, #a51c08 52%, #d0432c); }
.bookbar { position: relative; height: 27px; display: flex; align-items: flex-start; background: repeating-linear-gradient(transparent 0 3px, rgba(0,0,0,.2) 3px 4px), linear-gradient(rgba(140,140,140,.6), rgba(90,90,90,.4) 80%, rgba(0,0,0,.6)); }
.url { width: 138px; height: 22px; margin: 2px 0 0 4px; border-radius: 2px; background: #d9d9d9; display: flex; align-items: center; padding-left: 7px; gap: 6px; font-size: 13.500px; line-height: 20px; color: #888; }
.url b { font-weight: normal; color: #111; }
.marks { display: flex; align-items: center; height: 26px; margin-left: 6px; color: #fff; font-size: 13px; text-shadow: 1px 1px 1px #000; line-height: 24px; }
.mark { flex: none; display: flex; align-items: center; gap: 5px; }
.mark span { height: 25px; }
.mark .tri { margin-left: -4px; }

.view { display: flex; height: 790px; }
.page { flex: 1; background: #fff; color: #333; font-family: "Liberation Sans", Arial, sans-serif; padding: 47px 0 0 190px; }
.wrap { width: 950px; border-top: 1px solid #e6e6e6; padding-top: 12px; }
.head { display: flex; align-items: flex-start; height: 48px; }
.head h1, .step { font-size: 32.500px; line-height: 42px; font-weight: bold; margin: 2px 0 0 13px; height: 42px; }
.step { margin-left: 74px; color: #ddd; }
.back { margin: 2px 0 0 auto; width: 114px; height: 46px; border: 1px solid #e8e8e8; border-radius: 3px; background: #f2f2f2; color: #999; font-size: 16.500px; display: flex; align-items: center; justify-content: center; gap: 8px; padding-top: 1px; }
.back i { border: 5px solid transparent; border-top: 0; border-bottom-color: #999; margin-top: -3px; }
h2 { font-size: 37px; font-weight: normal; line-height: 42px; margin-top: 9px; height: 40px; }
.cols { display: flex; justify-content: space-between; }
.left { padding: 42px 0 0 1px; }
label { display: block; font-size: 18px; font-weight: bold; line-height: 20px; height: 20px; padding-left: 1px; }
.area { width: 589px; height: 122px; margin-top: 6px; border: 1px solid #bbb; border-top: 2px solid #808080; border-bottom-color: #ddd; padding: 7px 4px; display: flex; gap: 7px; }
.pill { height: 31px; border-radius: 16px; background: #3cf; color: #fff; font-size: 24px; line-height: 31px; padding: 0 17px 0 16px; }
.create { display: block; margin: 34px 0 0 -1px; width: 318px; height: 86px; border: 0; border-radius: 42px; background: #3cf; color: #fff; font: bold 37px/84px "Liberation Sans", Arial, sans-serif; padding: 0 1px 2px 0; text-align: center; }
.right { width: 310px; padding-top: 73px; }
.feed { display: flex; justify-content: space-between; align-items: flex-start; height: 53px; padding-right: 4px; }
.feed > svg { margin-top: 1px; }
h3 { font-size: 18px; line-height: 20px; height: 20px; }
.feed p { font-size: 12px; line-height: 14px; margin-top: 2px; }
.select, .list { font-family: "Noto Sans CJK JP", sans-serif; font-size: 14.500px; font-weight: 300; color: #000; margin-left: 1px; }
.select { width: 308px; height: 23px; border: 1px solid #b5cfe7; border-top-color: #5a93bd; display: flex; justify-content: space-between; line-height: 22px; padding-left: 4px; }
.drop { width: 18px; height: 23px; margin: -1px -1px 0 0; border: 1px solid #3c7fb1; background: linear-gradient(#eaf6fd 50%, #bee6fd 51%, #a7d9f5); display: flex; align-items: center; justify-content: center; }
.drop b { border: 4px solid transparent; border-top-color: #000; border-bottom: 0; }
.list { list-style: none; width: 308px; height: 175px; border: 1px solid #000; border-left: 2px solid #aaa; border-top-color: #888; background: #fff; }
.list li { height: 19.200px; line-height: 19px; padding-left: 3px; }
.list .on { background: #39f; color: #fff; }
.scroll { width: 16px; background: linear-gradient(90deg, #e3e3e3, #f2f2f2 4px); display: flex; flex-direction: column; align-items: center; }
.up, .down { border: 4px solid transparent; }
.up { border-bottom-color: #444; border-top: 0; margin-top: 7px; }
.down { border-top-color: #444; border-bottom: 0; margin-top: auto; margin-bottom: 6px; }
.thumb { width: 15px; height: 69px; margin: 567px 1px 0 0; border: 1px solid #979797; border-radius: 2px; background: linear-gradient(90deg, #f5f5f5, #e2e2e2 50%, #c8c8cc); display: flex; flex-direction: column; align-items: center; justify-content: center; gap: 2px; }
.thumb i { width: 7px; height: 1px; background: #444; }
.status { height: 25px; background: #000; border-top: 1px dotted #aaa; display: flex; justify-content: space-between; font: 15px/25px "Liberation Mono", monospace; color: #666; padding: 0 1px 0 2px; }
.ins { color: #b5b596; }

/* gadgets */
.side { position: absolute; left: 1451px; top: 0; width: 149px; height: 900px; color: #fff; }
.side-bg { position: absolute; left: 0; top: 0; }
.side > div { position: relative; }
.nav { margin: 10px 0 0 59px; height: 22px; }
.cal-title { margin: 18px 0 0 17px; width: 116px; height: 20px; display: flex; justify-content: space-between; align-items: center; font-size: 14px; text-shadow: 0 0 4px #ccc; }
.cal-title i { border: 5px solid transparent; border-width: 5px 10px; }
.cal-title .l { border-right-color: #fff; border-left: 0; }
.cal-title .r { border-left-color: #fff; border-right: 0; }
.cal { margin-left: 14px; display: grid; grid-template-columns: repeat(7, 17.200px); grid-template-rows: 20px repeat(6, 16px); font-size: 12.500px; line-height: 16px; text-align: center; width: 121px; height: 116px; }
.cal span { white-space: nowrap; margin: 0 -3px; }
.cal .h { font-size: 11.500px; line-height: 20px; }
.cal .dim { color: #777; }
.cal .sun { color: #e02020; }
.cal .sun.dim { color: #8f3a3a; }
.cal .sat { color: #12cfd0; }
.cal .sat.dim { color: #14716d; }
.cal .today { color: #fff; background: #a8a428; box-shadow: 0 0 4px #c8c428; margin: 2px 1px; line-height: 12px; letter-spacing: -.5px; }
.clock { margin: 15px 0 0 9px; width: 125px; height: 63px; border: 2px solid #3b6c72; border-radius: 3px; background: #000; text-align: center; }
.clock2 { margin: 14px 0 0 11px; }
.clock b { display: block; font-size: 12px; line-height: 20px; padding: 1px 0 0 3px; }
.led { display: block; font: 31px/37px "DejaVu Sans Mono", monospace; color: #a8e2fb; transform: scaleX(.58); text-shadow: 0 0 2px #1c7fc0; letter-spacing: 1px; }
.led2 { margin-left: -7px; }
.agenda { margin: 12px 0 0 10px; width: 130px; height: 120px; border: 3px solid #5d5f5f; background: repeating-linear-gradient(90deg, rgba(50,50,50,.25) 0 8px, transparent 8px 19px), repeating-linear-gradient(#1d1d1d 0 9px, #222 9px 18px); overflow: hidden; padding: 2px 2px 0; }
.ag-head { display: flex; height: 22px; padding-left: 32px; font-size: 11px; line-height: 18px; }
.ag-day { display: flex; justify-content: space-between; height: 14px; font-size: 10.500px; line-height: 13px; color: #7d838c; }
.ag-day em { font-style: normal; color: #ddd; margin-right: 2px; }
.ag-last { margin-top: -1px; }
.gold { color: #c49a2e; }
.ag-ev { display: flex; align-items: center; gap: 3px; height: 12px; margin-bottom: 7px; font-size: 11px; line-height: 12px; }
.ag-ev i { width: 4px; height: 9px; background: #b02020; flex: none; }
.ag-ev.jp { font-size: 12px; margin: -1px 0 0; font-family: "Noto Sans CJK JP", sans-serif; }
.jp i { background: #2b4fa8; }
.ag-more { position: absolute; right: 2px; bottom: 2px; }
.meter { margin: 12px 0 0 12px; width: 124px; height: 74px; border: 1px solid #1c5568; border-radius: 3px; background: linear-gradient(#1c4350, #254450 48%, #061b28 52%, #0d2b3a); padding: 0 5px; }
.mem { margin-top: 16px; height: 72px; }
.m-head { display: flex; align-items: center; height: 17px; font-size: 11px; line-height: 15px; gap: 3px; }
.m-head > svg { margin-left: -1px; }
.pc { margin-left: auto; }
.m-row { display: flex; align-items: center; height: 10px; font-size: 9px; line-height: 10px; }
.m-row i { width: 50px; height: 5px; background: #3d4a50; flex: none; }
.m-row u { display: block; height: 100%; background: #3fc45c; }
.cpu .m-row i { margin-right: 7px; }
.mem .m-row i { margin-right: 2px; }
.m-row.g { color: #8be887; }
.m-row.b { color: #74bdf2; }
.m-row.b u { background: #27b0d4; }
.graph { margin-top: 4px; }
.mem .graph { margin-top: 3px; }
.battery { margin: 16px 0 0 16px; height: 45px; width: 120px; display: flex; align-items: center; }
.cell { width: 115px; height: 45px; border: 2px solid #d8dccf; border-radius: 3px; background: linear-gradient(#6a985c, #9ab45c 55%, #b8cc5c 60%, #e6ee88); display: flex; flex-direction: column; align-items: center; }
.battery i { width: 5px; height: 16px; background: #d0d4c8; border-radius: 0 2px 2px 0; }
.full { font: 300 21px/24px Lato, sans-serif; color: #eee; text-shadow: 0 0 1px #eee; height: 24px; margin-top: 1px; }
.chg { font-size: 12px; line-height: 13px; color: #4c5c38; text-shadow: 0 0 1px #4c5c38; }
.pager { margin: 90px 0 0 41px; width: 108px; height: 101px; border: 6px solid #828787; border-radius: 6px; box-shadow: inset 0 0 0 1px #222, 0 0 0 1px #555; padding: 1px; }
.pager-in { height: 87px; background: #fff; display: grid; grid-template-columns: 42px 42px; grid-template-rows: 39px 39px; gap: 4px; padding: 2px; }
.desk { position: relative; border: 1px solid #000; background: #9c9c9c; color: #000; font: bold 12.500px/39px "Liberation Sans", sans-serif; text-align: center; }
.desk-on { background: #ccc; }
.mini { position: absolute; left: 0; top: -1px; display: grid; grid-template-columns: 16px 16px; }
```
FILE: app.js
```js
// bookmark toolbar: [left edge, icon, label, label width]
const marks = [
  [229, 'star'], [260, 'dark'], [282, 'blank', 'MacHtml', 52], [361, 'blank', 'AppHtml', 50],
  [439, 'gg'], [461, 'blank', 'G', 10], [497, 'reader'], [519, 'gg'], [541, 'check'],
  [563, 'blank', 'P', 8], [597, 'pocket'], [619, 'blank', 'C', 9], [654, 'blank', 'EN', 16],
  [697, 'blank', 'JA', 13], [737, 'trans'], [759, 'blank', 'GP', 16], [802, 'lsd'], [824, 'oo'],
  [846, 'tt'], [868, 'cloud'], [890, 'cloud2'], [912, 'cert', 'ADS', 24], [964, 'blank', 'OP', 16],
  [1007, 'dots'], [1029, 'net'], [1051, 'orange', 'ML', 17], [1095, 'orange', 'MK', 18],
  [1140, 'yh'], [1162, 'blank', 'B', 8], [1197, 'mm'], [1219, 'yy'], [1241, 'radio'],
  [1263, 'yt'], [1285, 'pac'], [1314, '', '»', 9], [1330, 'bm', 'ブックマーク', 73], [1426]
];
const bar = document.getElementById('marks');
for (let k = 0; k < marks.length - 1; k++) {
  const [x, icon, label, w] = marks[k];
  const el = document.createElement('div');
  el.className = 'mark';
  // the item before the overflow chevron leaves a wider space
  el.style.width = (marks[k + 1][0] - x) + 'px';
  el.innerHTML = (icon ? `<svg><use href="#${icon}"/></svg>` : '') +
    (icon === 'star' ? '<i class="tri"></i>' : '') +
    (label ? `<span data-w="${w}">${label}</span>` : '');
  bar.appendChild(el);
}

// calendar for March 2013, starting from Feb 24
const cal = document.getElementById('cal');
['Su', 'Mo', 'Tu', 'We', 'Th', 'Fr', 'Sa'].forEach(d => {
  cal.insertAdjacentHTML('beforeend', `<span class="h">${d}</span>`);
});
for (let n = 0; n < 42; n++) {
  const date = new Date(2013, 1, 24 + n);
  const day = date.getDate();
  const inMonth = date.getMonth() === 2;
  const cls = [];
  if (n % 7 === 0 || (inMonth && day === 20)) cls.push('sun');
  if (n % 7 === 6) cls.push('sat');
  if (!inMonth) cls.push('dim');
  if (inMonth && day === 17) cls.push('today');
  cal.insertAdjacentHTML('beforeend', `<span class="${cls.join(' ')}">${day}</span>`);
}

// space letters so each label takes its declared width
document.querySelectorAll('[data-w]').forEach(el => {
  const w = +el.dataset.w;
  const n = [...el.textContent].length;
  const natural = el.getBoundingClientRect().width;
  if (n > 1) el.style.letterSpacing = ((w - natural) / (n - 1)) + 'px';
  el.style.width = w + 'px';
});
```
